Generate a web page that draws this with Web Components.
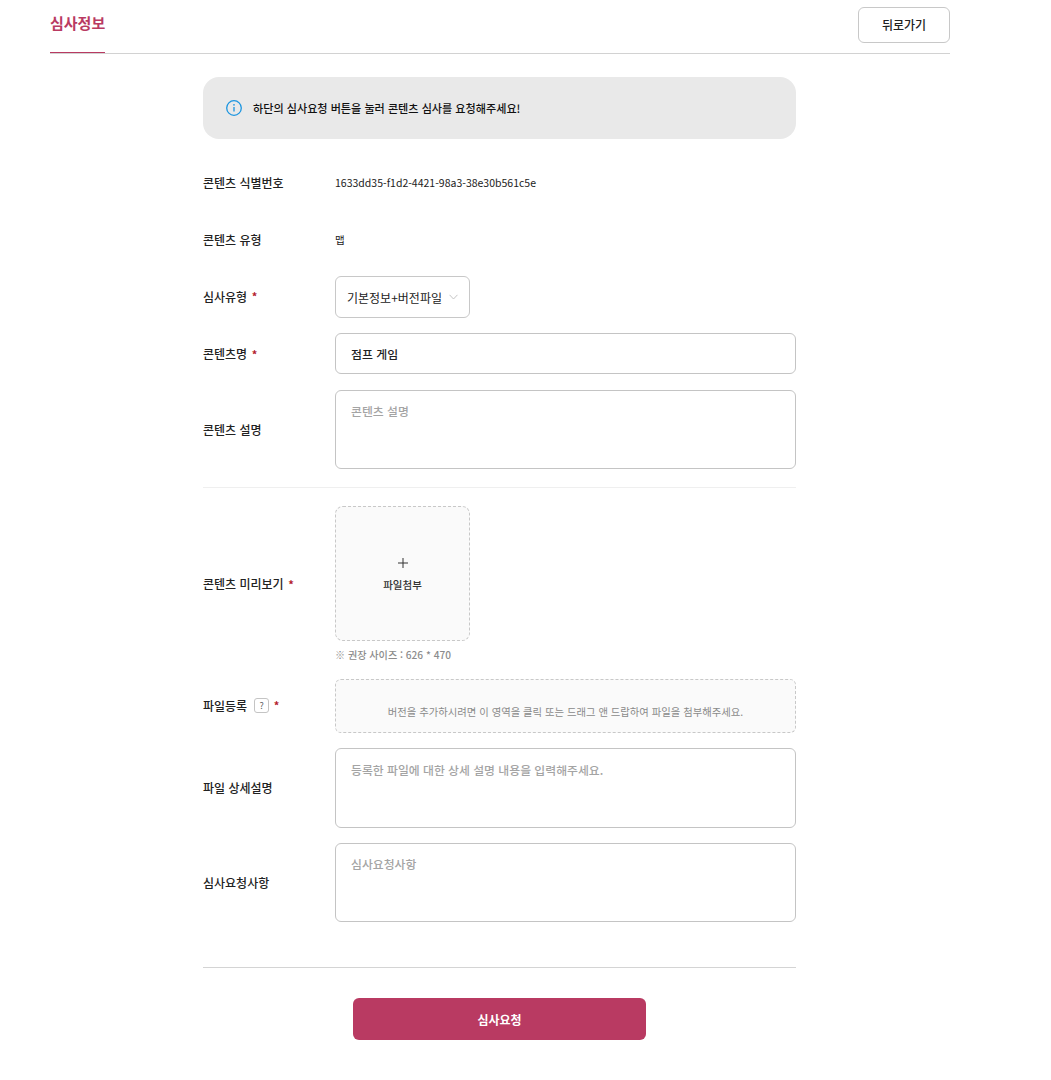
<!DOCTYPE html>
<html lang="ko"><head><meta charset="utf-8"><title>심사정보</title>
<style>
html,body{margin:0;padding:0;background:#fff}
body{font-family:"Noto Sans CJK KR","Noto Sans",sans-serif;color:#222;font-size:12px}
</style></head><body>
<review-page>
  <page-header slot="header" title="심사정보" action="뒤로가기"></page-header>
  <info-note>하단의 심사요청 버튼을 눌러 콘텐츠 심사를 요청해주세요!</info-note>
  <form-row label="콘텐츠 식별번호" style="--h:42px;--pb:2px"><plain-value>1633dd35-f1d2-4421-98a3-38e30b561c5e</plain-value></form-row>
  <form-row label="콘텐츠 유형" style="--h:42px;--pb:2px"><plain-value>맵</plain-value></form-row>
  <form-row label="심사유형" required style="--h:42px;--pb:2px"><select-box>기본정보+버전파일</select-box></form-row>
  <form-row label="콘텐츠명" required style="--h:41px;--mt:15px"><text-box style="--h:41px">점프 게임</text-box></form-row>
  <form-row label="콘텐츠 설명" style="--h:79px;--mt:16px"><text-box multi placeholder style="--h:79px;--pt:11px">콘텐츠 설명</text-box></form-row>
  <line-rule style="--mt:18px;--c:#efefef"></line-rule>
  <form-row label="콘텐츠 미리보기" required style="--h:135px;--mt:18px;--pt:20px"><upload-tile>파일첨부</upload-tile></form-row>
  <hint-text>※ 권장 사이즈 : 626 * 470</hint-text>
  <form-row label="파일등록" required help style="--h:54px;--mt:16px;--pb:2px"><drop-zone>버전을 추가하시려면 이 영역을 클릭 또는 드래그 앤 드랍하여 파일을 첨부해주세요.</drop-zone></form-row>
  <form-row label="파일 상세설명" style="--h:80px;--mt:15px;--pb:2px"><text-box multi placeholder style="--h:80px">등록한 파일에 대한 상세 설명 내용을 입력해주세요.</text-box></form-row>
  <form-row label="심사요청사항" style="--h:79px;--mt:15px"><text-box multi placeholder style="--h:79px;--pt:11px">심사요청사항</text-box></form-row>
  <line-rule style="--mt:45px;--c:#d4d4d4"></line-rule>
  <submit-button>심사요청</submit-button>
</review-page>
<script>
function def(name, html){
  customElements.define(name, class extends HTMLElement{
    connectedCallback(){
      if(this.shadowRoot) return;
      const r=this.attachShadow({mode:'open'});
      r.innerHTML = typeof html==='function' ? html(this) : html;
    }
  });
}
def('review-page',`<style>
:host{display:block;width:1051px;height:1080px;box-sizing:border-box;overflow:hidden}
.hd{width:900px;margin-left:50px}
.body{width:593px;margin-left:203px;display:flex;flex-direction:column}
</style><div class="hd"><slot name="header"></slot></div><div class="body"><slot></slot></div>`);
def('page-header',el=>`<style>
:host{display:flex;justify-content:space-between;height:54px;box-sizing:border-box;border-bottom:1px solid #d2d2d2}
.tab{width:55px;height:53px;box-sizing:border-box;border-bottom:1px solid #b93a62;color:#b93a62;font-size:15px;font-weight:700;line-height:46px;white-space:nowrap}
button{all:unset;box-sizing:border-box;width:92px;height:36px;margin-top:7px;border:1px solid #c8c8c8;border-radius:6px;background:#fff;text-align:center;font:500 12px/34px "Noto Sans CJK KR",sans-serif;color:#222}
</style><div class="tab">${el.getAttribute('title')}</div><button>${el.getAttribute('action')}</button>`);
def('info-note',`<style>
:host{display:flex;align-items:center;gap:11px;height:62px;margin-top:23px;padding-left:23px;box-sizing:border-box;background:#e9e9e9;border-radius:16px;font-size:11.1px;font-weight:500;color:#111}
svg{width:16px;height:16px;flex:none}
</style><svg viewBox="0 0 16 16" fill="none"><circle cx="8" cy="8" r="7.3" stroke="#1b95e0" stroke-width="1.3"/><path d="M8 7v4.6" stroke="#1b95e0" stroke-width="1.3"/><circle cx="8" cy="4.8" r=".85" fill="#1b95e0"/></svg><span><slot></slot></span>`);
def('form-row',el=>`<style>
:host{display:grid;grid-template-columns:132px 461px;align-items:center;height:var(--h,42px);margin-top:var(--mt,15px)}
:host(:first-of-type){margin-top:23px}
.l{font-size:12px;font-weight:500;color:#222;display:flex;align-items:center;white-space:nowrap;padding-top:var(--pt,0);padding-bottom:var(--pb,0)}
.s{color:#b3202c;margin-left:4.500px;font-size:11px;font-weight:700}
.q{display:inline-flex;align-items:center;justify-content:center;box-sizing:border-box;width:15px;height:15px;margin-left:7px;border:1px solid #c4c4c4;border-radius:3px;font-size:9px;color:#666;font-weight:400}
</style><div class="l">${el.getAttribute('label')}${el.hasAttribute('help')?'<span class="q">?</span>':''}${el.hasAttribute('required')?'<span class="s">*</span>':''}</div><div><slot></slot></div>`);
def('plain-value',`<style>:host{display:block;font-size:10.5px;color:#222;white-space:nowrap;line-height:16px}</style><slot></slot>`);
def('select-box',`<style>
:host{display:flex;align-items:center;justify-content:space-between;width:135px;height:42px;box-sizing:border-box;padding:0 11px;border:1px solid #c8c8c8;border-radius:6px;font-size:12px;color:#222;white-space:nowrap}
svg{width:9px;height:6px;flex:none}
</style><slot></slot><svg viewBox="0 0 9 6" fill="none"><path d="M.5.8 4.5 5 8.500.8" stroke="#c4c4c4"/></svg>`);
def('text-box',`<style>
:host{display:flex;box-sizing:border-box;height:var(--h);padding:0 15px;border:1px solid #c4c4c4;border-radius:6px;font-size:11.900px;font-weight:500;color:#222;align-items:center}
:host([multi]){align-items:flex-start;padding-top:var(--pt,12px);line-height:18px;color:#a4a4a4;font-weight:500;font-size:11.850px}
</style><slot></slot>`);
def('line-rule',`<style>:host{display:block;height:1px;margin-top:var(--mt);background:var(--c)}</style>`);
def('upload-tile',`<style>
:host{display:flex;flex-direction:column;align-items:center;justify-content:center;width:135px;height:135px;box-sizing:border-box;border:1px dashed #c8c8c8;border-radius:8px;background:#fafafa;font-size:10.500px;font-weight:500;color:#333;gap:9px;padding-top:2px}
svg{width:10px;height:10px}
</style><svg viewBox="0 0 10 10"><path d="M5 0v10M0 5h10" stroke="#333" stroke-width="1"/></svg><span><slot></slot></span>`);
def('hint-text',`<style>:host{display:block;margin:5px 0 0 132px;height:17px;line-height:17px;font-size:10.100px;font-weight:500;color:#8c8c8c;white-space:nowrap}</style><slot></slot>`);
def('drop-zone',`<style>
:host{display:flex;justify-content:center;align-items:flex-end;height:54px;box-sizing:border-box;padding-bottom:13px;border:1px dashed #c8c8c8;border-radius:6px;background:#fafafa;font-size:10.350px;color:#8a8a8a;white-space:nowrap}
</style><slot></slot>`);
def('submit-button',`<style>
:host{display:block;width:293px;height:42px;margin:30px 0 0 150px;border-radius:6px;background:#b93a62;color:#fff;text-align:center;font-size:12px;font-weight:700;line-height:43px}
</style><slot></slot>`);
</script></body></html>
